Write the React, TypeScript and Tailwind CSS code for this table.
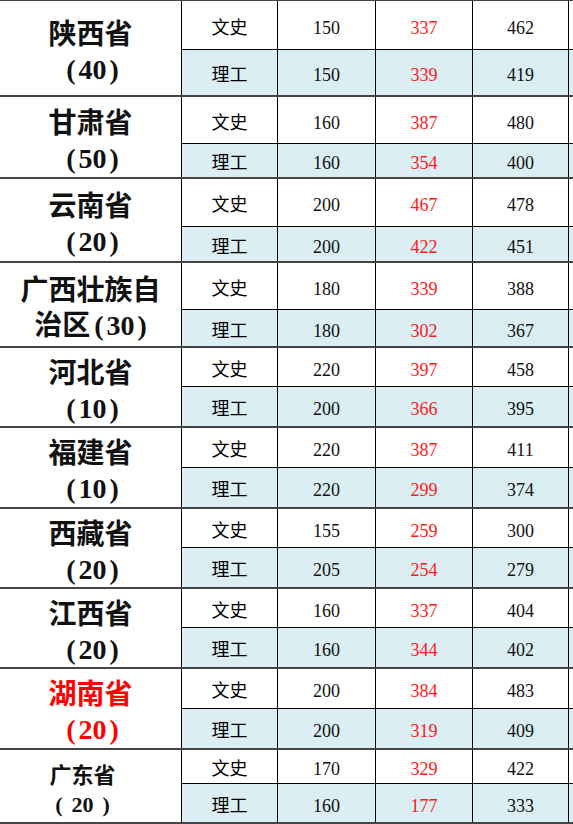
import React from 'react'

type Group = {
  name: [string, string, string]
  red?: boolean
  small?: boolean
  h: string
  r1: string
  wen: [string, string, string]
  li: [string, string, string]
}

// name: [first line, text before the bracket on line two, number in brackets]
const groups: Group[] = [
  { name: ['陕西省', '', '40'], h: 'h-[96px]', r1: 'h-[49px]', wen: ['150', '337', '462'], li: ['150', '339', '419'] },
  { name: ['甘肃省', '', '50'], h: 'h-[82px]', r1: 'h-[48px]', wen: ['160', '387', '480'], li: ['160', '354', '400'] },
  { name: ['云南省', '', '20'], h: 'h-[84px]', r1: 'h-[48px]', wen: ['200', '467', '478'], li: ['200', '422', '451'] },
  { name: ['广西壮族自', '治区', '30'], h: 'h-[85px]', r1: 'h-[47px]', wen: ['180', '339', '388'], li: ['180', '302', '367'] },
  { name: ['河北省', '', '10'], h: 'h-[80px]', r1: 'h-[39px]', wen: ['220', '397', '458'], li: ['200', '366', '395'] },
  { name: ['福建省', '', '10'], h: 'h-[81px]', r1: 'h-[40px]', wen: ['220', '387', '411'], li: ['220', '299', '374'] },
  { name: ['西藏省', '', '20'], h: 'h-[80px]', r1: 'h-[39px]', wen: ['155', '259', '300'], li: ['205', '254', '279'] },
  { name: ['江西省', '', '20'], h: 'h-[80px]', r1: 'h-[39px]', wen: ['160', '337', '404'], li: ['160', '344', '402'] },
  { name: ['湖南省', '', '20'], red: true, h: 'h-[81px]', r1: 'h-[40px]', wen: ['200', '384', '483'], li: ['200', '319', '409'] },
  { name: ['广东省', '', '20'], small: true, h: 'h-[74px]', r1: 'h-[34px]', wen: ['170', '329', '422'], li: ['160', '177', '333'] },
]

const font = { fontFamily: '"Liberation Serif", "Noto Sans CJK SC", serif' }

const Row = ({ kind, vals, className }: { kind: string; vals: [string, string, string]; className: string }) => (
  <div className={`flex ${className}`}>
    <div className="w-[96px] shrink-0 border-r border-black flex items-center justify-center pt-[6px] text-[18px] text-black">{kind}</div>
    <div className="w-[98px] shrink-0 border-r border-black flex items-center justify-center pt-[6px] text-[18px] text-[#111]">{vals[0]}</div>
    <div className="w-[97px] shrink-0 border-r border-black flex items-center justify-center pt-[6px] text-[18px] text-[#ff1a1a]">{vals[1]}</div>
    <div className="w-[96px] shrink-0 border-r border-black flex items-center justify-center pt-[6px] text-[18px] text-[#111]">{vals[2]}</div>
    <div className="flex-1" />
  </div>
)

export default function App() {
  return (
    <div className="w-[573px] h-[824px] overflow-hidden bg-white border-t border-[#444]" style={font}>
      {groups.map((g, i) => (
        <div key={i} className={`flex ${g.h} border-b-2 border-[#444]`}>
          <div
            className={`w-[182px] shrink-0 border-r border-black flex flex-col items-center justify-center pt-[7px] font-bold ${
              g.red ? 'text-[#ff0000]' : 'text-[#111]'
            } ${g.small ? 'text-[22px] leading-[29px] pr-[16px]' : 'text-[28px] leading-[35px]'}`}
          >
            <div>{g.name[0]}</div>
            {g.small ? (
              <div className="flex items-center">
                <span className="mr-[9px]">(</span>
                {g.name[2]}
                <span className="ml-[9px]">)</span>
              </div>
            ) : (
              <div className="flex items-center">
                {g.name[1]}
                <span className="ml-[4px] mr-[3px]">(</span>
                {g.name[2]}
                <span className="ml-[3px]">)</span>
              </div>
            )}
          </div>
          <div className="flex-1 flex flex-col">
            <Row kind="文史" vals={g.wen} className={`${g.r1} border-b border-black bg-white`} />
            <Row kind="理工" vals={g.li} className="flex-1 bg-[#daeef3]" />
          </div>
        </div>
      ))}
    </div>
  )
}
